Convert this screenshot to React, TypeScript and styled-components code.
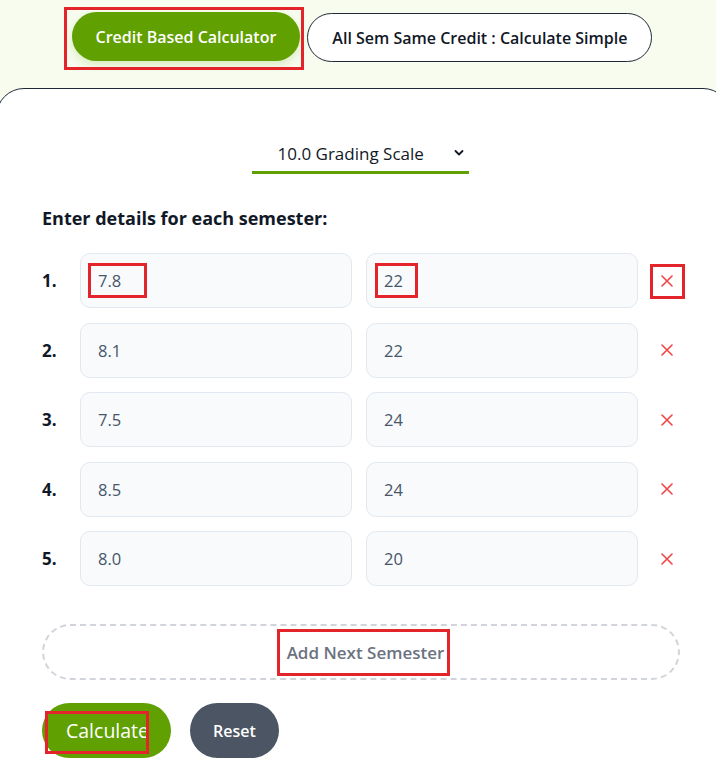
import React, { useState } from 'react';
import styled, { createGlobalStyle } from 'styled-components';

const GlobalStyle = createGlobalStyle`
  html, body {
    margin: 0;
    padding: 0;
    background: #f7fcee;
    overflow: hidden;
  }
  body {
    font-family: 'Open Sans', 'Noto Sans', sans-serif;
    color: #111827;
  }
  * {
    box-sizing: border-box;
  }
`;

const green = '#60a000';

const Page = styled.div`
  width: 724px;
  padding-top: 12px;
`;

const ModeBar = styled.div`
  display: flex;
  justify-content: center;
  gap: 7px;
  height: 76px;
`;

const ModeButton = styled.button<{ $active?: boolean }>`
  position: relative;
  height: 49px;
  padding: 0 24px;
  border-radius: 999px;
  font-family: inherit;
  font-size: 16px;
  font-weight: 600;
  cursor: pointer;
  border: ${(p) => (p.$active ? 'none' : '1px solid #1f2937')};
  background: ${(p) => (p.$active ? green : '#fff')};
  color: ${(p) => (p.$active ? '#fff' : '#111827')};
  box-shadow: ${(p) => (p.$active ? '0 4px 8px rgba(96, 160, 0, 0.18)' : 'none')};
  margin-top: ${(p) => (p.$active ? '0' : '1px')};
`;

// red marker rectangle drawn over a control
const Highlight = styled.span<{ $inset: string }>`
  position: absolute;
  inset: ${(p) => p.$inset};
  border: 3px solid #e3242b;
  pointer-events: none;
`;

const Card = styled.div`
  margin-left: -4px;
  width: 735px;
  min-height: 700px;
  background: #fff;
  border: 1px solid #1f2937;
  border-radius: 28px 28px 0 0;
  padding: 46px 0 0 45px;
`;

const Content = styled.div`
  width: 640px;
  display: flex;
  flex-direction: column;
`;

const ScaleWrap = styled.div`
  position: relative;
  align-self: center;
  margin-left: -4px;
  width: 217px;
`;

const ScaleSelect = styled.select`
  appearance: none;
  width: 100%;
  height: 39px;
  border: none;
  border-bottom: 3px solid ${green};
  background: transparent;
  font-family: inherit;
  font-size: 17px;
  color: #111827;
  padding: 0 0 0 26px;
  outline: none;
`;

const Chevron = styled.svg`
  position: absolute;
  right: 5px;
  top: 14px;
  pointer-events: none;
`;

const Heading = styled.h3`
  margin: 32px 0 0;
  font-size: 18px;
  font-weight: 700;
  line-height: 24px;
`;

const Rows = styled.div`
  display: flex;
  flex-direction: column;
  gap: 14.5px;
  margin-top: 23px;
`;

const Row = styled.div`
  display: grid;
  grid-template-columns: 24px 272px 272px 30px;
  column-gap: 14px;
  align-items: center;
`;

const RowIndex = styled.span`
  font-size: 17px;
  font-weight: 700;
`;

const FieldWrap = styled.div`
  position: relative;
`;

const Field = styled.input`
  width: 100%;
  height: 55px;
  border: 1px solid #e2e8f0;
  border-radius: 10px;
  background: #f8fafc;
  padding: 0 17px;
  font-family: inherit;
  font-size: 16.5px;
  color: #475569;
  outline: none;
`;

const RemoveButton = styled.button`
  position: relative;
  width: 30px;
  height: 30px;
  border: none;
  background: none;
  padding: 0;
  display: flex;
  align-items: center;
  justify-content: center;
  cursor: pointer;
`;

const AddButton = styled.button`
  margin-top: 38px;
  width: 638px;
  height: 56px;
  border: 2px dashed #d1d5db;
  border-radius: 999px;
  background: #fff;
  padding: 0 0 0 9px;
  font-family: inherit;
  font-size: 17px;
  font-weight: 600;
  color: #6b7280;
  cursor: pointer;
`;

const AddLabel = styled.span`
  position: relative;
`;

const Actions = styled.div`
  display: flex;
  gap: 19px;
  margin-top: 23px;
`;

const ActionButton = styled.button<{ $tone: 'primary' | 'muted' }>`
  position: relative;
  height: 55px;
  border: none;
  border-radius: 999px;
  font-family: inherit;
  color: #fff;
  cursor: pointer;
  background: ${(p) => (p.$tone === 'primary' ? green : '#4b5563')};
  font-size: ${(p) => (p.$tone === 'primary' ? '19.5px' : '16px')};
  font-weight: ${(p) => (p.$tone === 'primary' ? 400 : 600)};
  padding: ${(p) => (p.$tone === 'primary' ? '0 22px 0 24px' : '0 23px')};
`;

const CrossIcon = () => (
  <svg width="12" height="12" viewBox="0 0 12 12">
    <path d="M1 1L11 11M11 1L1 11" stroke="#ef4444" strokeWidth="1.6" strokeLinecap="round" />
  </svg>
);

type Semester = { gpa: string; credits: string };

const initial: Semester[] = [
  { gpa: '7.8', credits: '22' },
  { gpa: '8.1', credits: '22' },
  { gpa: '7.5', credits: '24' },
  { gpa: '8.5', credits: '24' },
  { gpa: '8.0', credits: '20' },
];

export default function App() {
  const [rows, setRows] = useState<Semester[]>(initial);

  const update = (i: number, key: keyof Semester, value: string) =>
    setRows((prev) => prev.map((r, j) => (j === i ? { ...r, [key]: value } : r)));

  return (
    <Page>
      <GlobalStyle />
      <ModeBar>
        <ModeButton $active>
          Credit Based Calculator
          <Highlight $inset="-5px -4px -9px -8px" />
        </ModeButton>
        <ModeButton>All Sem Same Credit : Calculate Simple</ModeButton>
      </ModeBar>

      <Card>
        <Content>
          <ScaleWrap>
            <ScaleSelect defaultValue="10">
              <option value="10">10.0 Grading Scale</option>
              <option value="4">4.0 Grading Scale</option>
            </ScaleSelect>
            <Chevron width="10" height="8" viewBox="0 0 10 8">
              <path d="M1.5 2L5 5.5L8.5 2" fill="none" stroke="#111827" strokeWidth="1.8" strokeLinecap="round" strokeLinejoin="round" />
            </Chevron>
          </ScaleWrap>

          <Heading>Enter details for each semester:</Heading>

          <Rows>
            {rows.map((r, i) => (
              <Row key={i}>
                <RowIndex>{i + 1}.</RowIndex>
                <FieldWrap>
                  <Field value={r.gpa} onChange={(e) => update(i, 'gpa', e.target.value)} />
                  {i === 0 && <Highlight $inset="10px auto auto 8px" style={{ width: 59, height: 35 }} />}
                </FieldWrap>
                <FieldWrap>
                  <Field value={r.credits} onChange={(e) => update(i, 'credits', e.target.value)} />
                  {i === 0 && <Highlight $inset="10px auto auto 9px" style={{ width: 43, height: 35 }} />}
                </FieldWrap>
                <RemoveButton onClick={() => setRows((prev) => prev.filter((_, j) => j !== i))}>
                  <CrossIcon />
                  {i === 0 && <Highlight $inset="-2px -3px -3px -2px" />}
                </RemoveButton>
              </Row>
            ))}
          </Rows>

          <AddButton onClick={() => setRows((prev) => [...prev, { gpa: '', credits: '' }])}>
            <AddLabel>
              Add Next Semester
              <Highlight $inset="-12px -6px -12px -10px" />
            </AddLabel>
          </AddButton>

          <Actions>
            <ActionButton $tone="primary">
              Calculate
              <Highlight $inset="8px 22px 4px 3px" />
            </ActionButton>
            <ActionButton $tone="muted" onClick={() => setRows(initial)}>
              Reset
            </ActionButton>
          </Actions>
        </Content>
      </Card>
    </Page>
  );
}
